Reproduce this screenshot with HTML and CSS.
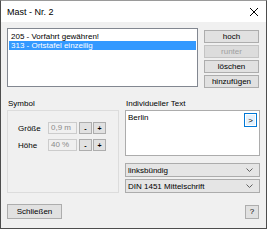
FILE: index.html
```html
<!DOCTYPE html>
<html>
<head>
<meta charset="utf-8">
<link rel="stylesheet" href="styles.css">
</head>
<body>
<div class="window">
  <div class="titlebar">
    <span class="title">Mast - Nr. 2</span>
    <svg class="close" width="10" height="10" viewBox="0 0 10 10"><path d="M1 1 L9 9 M9 1 L1 9" stroke="#000" stroke-width="1" fill="none"/></svg>
  </div>
  <div class="content">
    <div class="toprow">
      <div class="listbox">
        <div class="item">205 - Vorfahrt gewähren!</div>
        <div class="item selected">313 - Ortstafel einzeilig</div>
      </div>
      <div class="btncol">
        <div class="btn">hoch</div>
        <div class="btn disabled">runter</div>
        <div class="btn">löschen</div>
        <div class="btn">hinzufügen</div>
      </div>
    </div>
    <div class="midrow">
      <div class="leftcol">
        <div class="label">Symbol</div>
        <div class="group">
          <div class="frow">
            <span class="flabel">Größe</span>
            <div class="input dis">0,9 m</div>
            <div class="sbtn">-</div>
            <div class="sbtn">+</div>
          </div>
          <div class="frow">
            <span class="flabel">Höhe</span>
            <div class="input dis">40 %</div>
            <div class="sbtn">-</div>
            <div class="sbtn">+</div>
          </div>
        </div>
      </div>
      <div class="rightcol">
        <div class="label">Individueller Text</div>
        <div class="textbox">
          <span>Berlin</span>
          <div class="morebtn">&gt;</div>
        </div>
        <div class="combo first"><span>linksbündig</span><svg width="7" height="4" viewBox="0 0 7 4"><path d="M0.5 0.5 L3.5 3.5 L6.5 0.5" stroke="#606060" fill="none"/></svg></div>
        <div class="combo"><span>DIN 1451 Mittelschrift</span><svg width="7" height="4" viewBox="0 0 7 4"><path d="M0.5 0.5 L3.5 3.5 L6.5 0.5" stroke="#606060" fill="none"/></svg></div>
      </div>
    </div>
    <div class="bottomrow">
      <div class="btn close-btn">Schließen</div>
      <div class="btn help">?</div>
    </div>
  </div>
</div>
</body>
</html>
```

FILE: styles.css
```css
* { box-sizing: border-box; }
html, body { margin: 0; padding: 0; background: #f0f0f0; }
body {
  font-family: "Liberation Sans", Arial, sans-serif;
  font-size: 8px;
  color: #000;
}
.window {
  width: 267px;
  height: 229px;
  border: 1px solid #4d4d4d;
  border-top-color: #9a9a9a;
  display: flex;
  flex-direction: column;
  background: #f0f0f0;
}
.titlebar {
  height: 21px;
  background: #fff;
  display: flex;
  align-items: center;
  justify-content: space-between;
  padding: 0 7px 0 6px;
  flex-shrink: 0;
}
.title { font-size: 9px; }
.close { display: block; }
.content {
  flex: 1;
  padding: 6px 6px 0 6px;
  display: flex;
  flex-direction: column;
}
.toprow {
  display: flex;
  gap: 6px;
}
.listbox {
  width: 191px;
  height: 59px;
  background: #fff;
  border: 1px solid #828790;
  padding: 3px 1px 0 1px;
}
.item {
  height: 9px;
  line-height: 9px;
  padding-left: 2px;
  white-space: nowrap;
}
.item.selected {
  background: #3399ff;
  color: #fff;
}
.btncol {
  display: flex;
  flex-direction: column;
  gap: 2px;
  padding-top: 2px;
}
.btn {
  width: 55px;
  height: 13px;
  background: #e1e1e1;
  border: 1px solid #adadad;
  display: flex;
  align-items: center;
  justify-content: center;
  line-height: 1;
}
.btn.disabled {
  color: #a0a0a0;
  border-color: #c4c4c4;
  background: #dcdcdc;
}
.midrow {
  display: flex;
  gap: 6px;
  margin-top: 11px;
}
.label {
  height: 11px;
  line-height: 10px;
  padding-left: 1px;
}
.leftcol { width: 112px; display: flex; flex-direction: column; }
.group {
  height: 83px;
  border: 1px solid #dcdcdc;
  padding: 11px 0 0 9px;
  display: flex;
  flex-direction: column;
  gap: 5px;
}
.frow {
  display: flex;
  align-items: center;
  height: 12px;
}
.flabel { width: 31px; padding-left: 1px; }
.input {
  width: 29px;
  height: 12px;
  border: 1px solid #cccccc;
  background: #f0f0f0;
  color: #8a8a8a;
  padding-left: 2px;
  line-height: 10px;
  margin-right: 1px;
}
.sbtn {
  width: 13px;
  height: 12px;
  margin-left: 1px;
  background: #e1e1e1;
  border: 1px solid #adadad;
  display: flex;
  align-items: center;
  justify-content: center;
  font-weight: bold;
  font-size: 7px;
}
.rightcol { width: 135px; display: flex; flex-direction: column; }
.textbox {
  height: 46px;
  background: #fff;
  border: 1px solid #acacac;
  display: flex;
  justify-content: space-between;
  align-items: flex-start;
  padding: 2px 2px 0 2px;
}
.textbox span { line-height: 10px; }
.morebtn {
  width: 13px;
  height: 14px;
  border: 1px solid #0078d7;
  background: #e5f1fb;
  box-shadow: inset 0 0 0 1px #fff;
  display: flex;
  align-items: center;
  justify-content: center;
  margin-top: 0px;
  font-size: 8px;
}
.combo {
  height: 14px;
  background: #e5e5e5;
  border: 1px solid #acacac;
  display: flex;
  align-items: center;
  justify-content: space-between;
  padding: 0 6px 0 2px;
  margin-top: 2px;
}
.combo.first { margin-top: 7px; }
.bottomrow {
  display: flex;
  justify-content: space-between;
  align-items: flex-end;
  margin-top: 11px;
  padding-right: 1px;
}
.close-btn { height: 15px; }
.help { width: 14px; height: 14px; }
```
